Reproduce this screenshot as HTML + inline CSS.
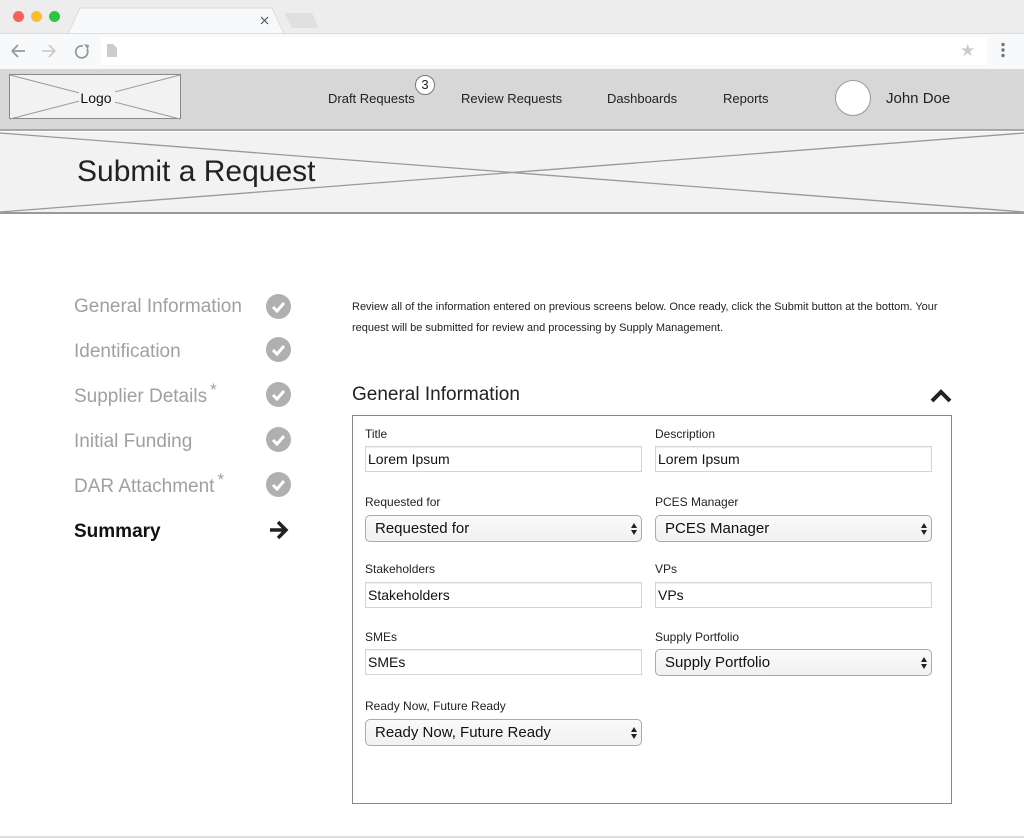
<!DOCTYPE html>
<html><head><meta charset="utf-8">
<style>
*{margin:0;padding:0;box-sizing:border-box}
body{width:1024px;height:838px;position:relative;overflow:hidden;background:#fff;font-family:"Liberation Sans",Arial,sans-serif;color:#222}
.a{position:absolute}
.lbl{position:absolute;font-size:12px;color:#222}
.inp{position:absolute;height:26px;border:1px solid #d4d4d4;box-shadow:inset 0 1px 1px #eee;font-size:14px;padding:4px 0 0 2px;background:#fff;color:#111}
.sel{position:absolute;height:27px;border:1px solid #aaa;border-radius:5px;background:linear-gradient(#fafafa,#f1f1f1);font-size:15px;padding:4px 0 0 9px;color:#111}
.sel:after{content:"";position:absolute;right:4px;top:7px;width:0;height:0;border-left:3px solid transparent;border-right:3px solid transparent;border-bottom:5px solid #222}
.sel:before{content:"";position:absolute;right:4px;top:14px;width:0;height:0;border-left:3px solid transparent;border-right:3px solid transparent;border-top:5px solid #222}
.step{position:absolute;left:74px;font-size:19px;color:#a0a0a0}
.chk{position:absolute;left:266px;width:25px;height:25px;border-radius:50%;background:#b0b0b0}
.chk svg{position:absolute;left:0;top:0}
.star{font-size:17px;vertical-align:top;position:relative;top:-6px;margin-left:3px}
.nav{position:absolute;top:91px;font-size:13px;color:#222}
</style></head><body>
<div class="a" style="left:0;top:0;width:1024px;height:33px;background:#ededed"></div>
<div class="a" style="left:13px;top:11px;width:11px;height:11px;border-radius:50%;background:#fc5f57"></div>
<div class="a" style="left:31px;top:11px;width:11px;height:11px;border-radius:50%;background:#fdbc2e"></div>
<div class="a" style="left:49px;top:11px;width:11px;height:11px;border-radius:50%;background:#29c83f"></div>
<svg class="a" style="left:60px;top:7px" width="260" height="27"><path d="M8 27 L20 1 L212 1 L224 27Z" fill="#f8f9fa" stroke="#ddd"/><path d="M224 6 L252 6 L259 21 L232 21Z" fill="#e0e0e0"/><path d="M201 10 l7 7 M208 10 l-7 7" stroke="#555" stroke-width="1.2"/></svg>
<div class="a" style="left:0;top:33px;width:1024px;height:36px;background:#f8f9fa;border-top:1px solid #ddd"></div>
<div class="a" style="left:101px;top:37px;width:886px;height:28px;background:#fff"></div>
<svg class="a" style="left:8px;top:40px" width="90" height="22"><path d="M4 11h13M4 11l6-6M4 11l6 6" stroke="#999" stroke-width="1.8" fill="none"/><path d="M34 11h13M47 11l-6-6M47 11l-6 6" stroke="#ccc" stroke-width="1.8" fill="none"/><path d="M75 6a6 6 0 1 0 4 3" stroke="#999" stroke-width="1.8" fill="none"/><path d="M76 4l5 1-1 5z" fill="#999"/></svg>
<svg class="a" style="left:106px;top:43px" width="12" height="15"><path d="M1 1h6l4 4v9H1z" fill="#ccc"/></svg>
<div class="a" style="left:960px;top:41px;color:#ccc;font-size:17px">★</div>
<svg class="a" style="left:1000px;top:42px" width="6" height="16"><circle cx="3" cy="2.5" r="1.7" fill="#777"/><circle cx="3" cy="8" r="1.7" fill="#777"/><circle cx="3" cy="13.5" r="1.7" fill="#777"/></svg>
<div class="a" style="left:0;top:69px;width:1024px;height:62px;background:#d7d7d7;border-bottom:2px solid #a8a8a8"></div>
<svg class="a" style="left:9px;top:74px" width="172" height="46"><rect x="0.5" y="0.5" width="171" height="44" fill="#f2f2f2" stroke="#888"/><path d="M1 1L171 45M171 1L1 45" stroke="#999"/><rect x="70" y="15" width="36" height="18" fill="#f2f2f2"/><text x="87" y="29" font-size="14" text-anchor="middle" font-family="Liberation Sans" fill="#111">Logo</text></svg>
<div class="nav" style="left:328px">Draft Requests</div>
<div class="a" style="left:415px;top:75px;width:20px;height:20px;border-radius:50%;background:#fff;border:1px solid #777;font-size:13px;text-align:center;line-height:18px">3</div>
<div class="nav" style="left:461px">Review Requests</div>
<div class="nav" style="left:607px">Dashboards</div>
<div class="nav" style="left:723px">Reports</div>
<div class="a" style="left:835px;top:80px;width:36px;height:36px;border-radius:50%;background:#fff;border:1px solid #999"></div>
<div class="a" style="left:886px;top:90px;font-size:15px">John Doe</div>
<svg class="a" style="left:0;top:132px" width="1024" height="82"><rect width="1024" height="82" fill="#f2f2f2"/><path d="M0 1L1024 80M1024 1L0 80" stroke="#999" stroke-width="1.3"/><rect y="80" width="1024" height="2" fill="#999"/></svg>
<div class="a" style="left:77px;top:155px;font-size:30px;color:#222">Submit a Request</div>
<div class="step" style="top:296px">General Information</div>
<div class="step" style="top:341px">Identification</div>
<div class="step" style="top:386px">Supplier Details<span class="star">*</span></div>
<div class="step" style="top:431px">Initial Funding</div>
<div class="step" style="top:476px">DAR Attachment<span class="star">*</span></div>
<div class="step" style="top:521px;color:#111;font-weight:bold">Summary</div>
<div class="chk" style="top:294px"><svg width="25" height="25"><path d="M7 13l4 4 7-8" stroke="#fff" stroke-width="3" fill="none"/></svg></div>
<div class="chk" style="top:337px"><svg width="25" height="25"><path d="M7 13l4 4 7-8" stroke="#fff" stroke-width="3" fill="none"/></svg></div>
<div class="chk" style="top:382px"><svg width="25" height="25"><path d="M7 13l4 4 7-8" stroke="#fff" stroke-width="3" fill="none"/></svg></div>
<div class="chk" style="top:427px"><svg width="25" height="25"><path d="M7 13l4 4 7-8" stroke="#fff" stroke-width="3" fill="none"/></svg></div>
<div class="chk" style="top:472px"><svg width="25" height="25"><path d="M7 13l4 4 7-8" stroke="#fff" stroke-width="3" fill="none"/></svg></div>
<svg class="a" style="left:268px;top:519px" width="22" height="22"><path d="M2 11h15M10 3l8 8-8 8" stroke="#222" stroke-width="3.5" fill="none"/></svg>
<div class="a" style="left:352px;top:297px;font-size:11px;line-height:21px;color:#222;width:600px">Review all of the information entered on previous screens below. Once ready, click the Submit button at the bottom. Your request will be submitted for review and processing by Supply Management.</div>
<div class="a" style="left:352px;top:384px;font-size:19px;color:#222">General Information</div>
<svg class="a" style="left:929px;top:388px" width="24" height="16"><path d="M3 13l9-9 9 9" stroke="#222" stroke-width="4" fill="none"/></svg>
<div class="a" style="left:352px;top:415px;width:600px;height:389px;border:1px solid #888"></div>
<div class="lbl" style="left:365px;top:427px">Title</div>
<div class="inp" style="left:365px;top:446px;width:277px">Lorem Ipsum</div>
<div class="lbl" style="left:655px;top:427px">Description</div>
<div class="inp" style="left:655px;top:446px;width:277px">Lorem Ipsum</div>
<div class="lbl" style="left:365px;top:495px">Requested for</div>
<div class="sel" style="left:365px;top:515px;width:277px">Requested for</div>
<div class="lbl" style="left:655px;top:495px">PCES Manager</div>
<div class="sel" style="left:655px;top:515px;width:277px">PCES Manager</div>
<div class="lbl" style="left:365px;top:562px">Stakeholders</div>
<div class="inp" style="left:365px;top:582px;width:277px">Stakeholders</div>
<div class="lbl" style="left:655px;top:562px">VPs</div>
<div class="inp" style="left:655px;top:582px;width:277px">VPs</div>
<div class="lbl" style="left:365px;top:630px">SMEs</div>
<div class="inp" style="left:365px;top:649px;width:277px">SMEs</div>
<div class="lbl" style="left:655px;top:630px">Supply Portfolio</div>
<div class="sel" style="left:655px;top:649px;width:277px">Supply Portfolio</div>
<div class="lbl" style="left:365px;top:699px">Ready Now, Future Ready</div>
<div class="sel" style="left:365px;top:719px;width:277px">Ready Now, Future Ready</div>
<div class="a" style="left:0;top:836px;width:1024px;height:2px;background:#ddd"></div>
</body></html>
